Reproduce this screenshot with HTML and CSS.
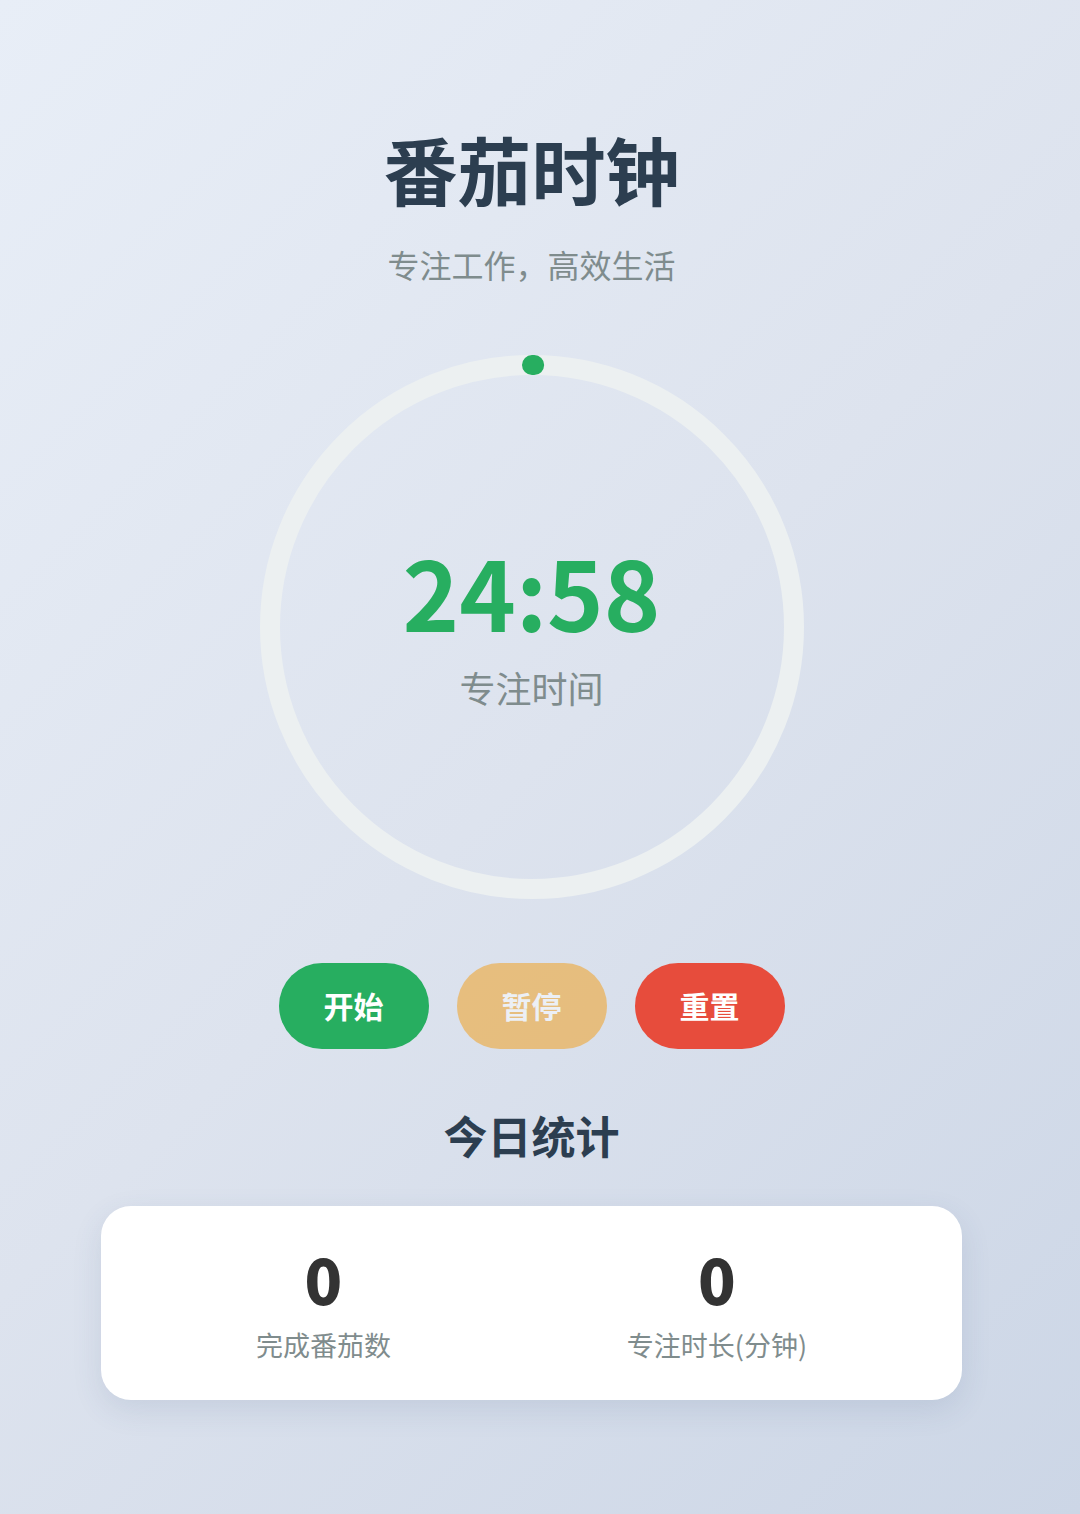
FILE: index.html
```html
<!DOCTYPE html>
<html lang="zh-CN">
<head>
<meta charset="utf-8">
<title>番茄时钟</title>
<link rel="stylesheet" href="styles.css">
</head>
<body>
<main class="app">
  <h1 class="title">番茄时钟</h1>
  <p class="subtitle">专注工作，高效生活</p>

  <div class="timer">
    <svg class="ring" width="544" height="544" viewBox="0 0 544 544">
      <circle class="ring-track" cx="272" cy="272" r="262"></circle>
      <circle class="ring-progress" cx="272" cy="272" r="262" stroke-dasharray="2.2 1700" transform="rotate(-90 272 272)"></circle>
    </svg>
    <div class="timer-text">
      <div class="time">24:58</div>
      <div class="mode">专注时间</div>
    </div>
  </div>

  <div class="controls">
    <button class="btn btn-start">开始</button>
    <button class="btn btn-pause" disabled>暂停</button>
    <button class="btn btn-reset">重置</button>
  </div>

  <h2 class="stats-title">今日统计</h2>
  <section class="stats">
    <div class="stat">
      <div class="stat-value">0</div>
      <div class="stat-label">完成番茄数</div>
    </div>
    <div class="stat">
      <div class="stat-value">0</div>
      <div class="stat-label">专注时长(分钟)</div>
    </div>
  </section>
</main>
</body>
</html>
```

FILE: styles.css
```css
* { box-sizing: border-box; }
html, body { margin: 0; padding: 0; }
body {
  min-height: 1514px;
  background: linear-gradient(135deg, #e8eef7 0%, #dde3ee 50%, #ccd6e6 100%);
  font-family: "Noto Sans CJK SC", "Noto Sans", sans-serif;
}
.app {
  width: 1063px;
  display: flex;
  flex-direction: column;
  align-items: center;
  padding-top: 128px;
}
.title {
  margin: 0;
  font-size: 74px;
  line-height: 80px;
  font-weight: 700;
  color: #2c3e50;
}
.subtitle {
  margin: 36px 0 0;
  font-size: 32px;
  line-height: 40px;
  color: #7f8c8d;
}
.timer {
  position: relative;
  width: 544px;
  height: 544px;
  margin-top: 71px;
}
.ring { display: block; }
.ring-track {
  fill: none;
  stroke: #ecf0f1;
  stroke-width: 20;
}
.ring-progress {
  fill: none;
  stroke: #27ae60;
  stroke-width: 20;
  stroke-linecap: round;
}
.timer-text {
  position: absolute;
  inset: 0;
  display: flex;
  flex-direction: column;
  align-items: center;
  justify-content: center;
  gap: 24px;
  padding-bottom: 4px;
}
.time {
  font-size: 96px;
  line-height: 100px;
  font-weight: 700;
  color: #27ae60;
}
.mode {
  font-size: 36px;
  line-height: 44px;
  color: #7f8c8d;
}
.controls {
  display: flex;
  gap: 28px;
  margin-top: 64px;
}
.btn {
  width: 150px;
  height: 86px;
  border: none;
  border-radius: 43px;
  font-family: "Noto Sans CJK SC", sans-serif;
  font-size: 30px;
  font-weight: 700;
  color: #fff;
  padding: 0 0 2px;
}
.btn-start { background: #27ae60; }
.btn-pause { background: #f39c12; opacity: 0.5; }
.btn-reset { background: #e74c3c; }
.stats-title {
  margin: 58px 0 0;
  font-size: 44px;
  line-height: 56px;
  font-weight: 700;
  color: #2c3e50;
}
.stats {
  margin-top: 43px;
  width: 861px;
  height: 194px;
  background: #fff;
  border-radius: 30px;
  box-shadow: 0 10px 30px rgba(60, 80, 120, 0.12);
  display: flex;
  justify-content: space-around;
  align-items: center;
  padding: 0 37px;
}
.stat {
  display: flex;
  flex-direction: column;
  align-items: center;
}
.stat-value {
  font-size: 62px;
  line-height: 70px;
  font-weight: 900;
  color: #333;
}
.stat-label {
  margin-top: 14px;
  font-size: 27px;
  line-height: 36px;
  color: #7f8c8d;
}
```
